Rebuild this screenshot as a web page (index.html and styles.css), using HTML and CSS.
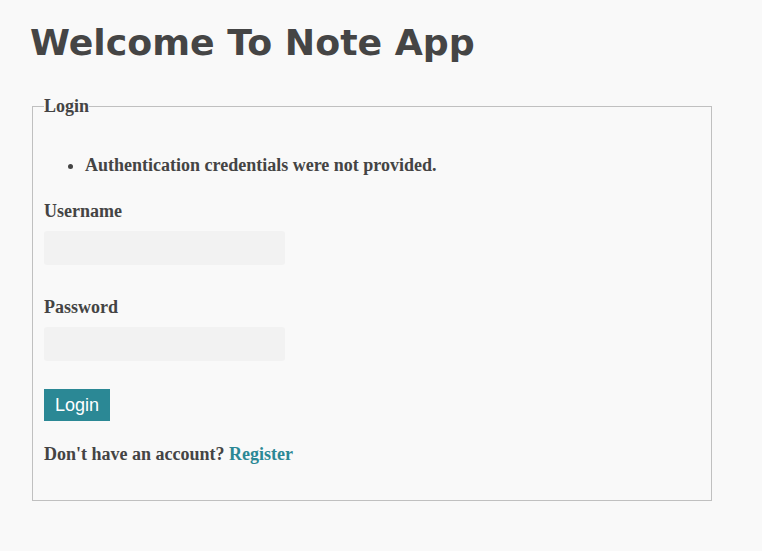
FILE: index.html
```html
<!DOCTYPE html>
<html lang="en">
<head>
<meta charset="utf-8">
<title>Note App</title>
<link rel="stylesheet" href="styles.css">
</head>
<body>
<div class="page">
  <h1 class="title">Welcome To Note App</h1>
  <fieldset class="login-box">
    <legend class="login-legend">Login</legend>
    <ul class="errors">
      <li>Authentication credentials were not provided.</li>
    </ul>
    <form class="login-form">
      <div class="field">
        <label class="field-label" for="username">Username</label>
        <input class="field-input" type="text" id="username" name="username">
      </div>
      <div class="field">
        <label class="field-label" for="password">Password</label>
        <input class="field-input" type="password" id="password" name="password">
      </div>
      <div class="actions">
        <button class="btn" type="button">Login</button>
      </div>
      <p class="register">Don't have an account? <a class="register-link" href="#">Register</a></p>
    </form>
  </fieldset>
</div>
</body>
</html>
```

FILE: styles.css
```css
html, body {
  margin: 0;
  padding: 0;
  background: #f9f9f9;
}

body {
  font-family: "Liberation Serif", "Times New Roman", serif;
  font-size: 18px;
  font-weight: bold;
  color: #444444;
}

.page {
  width: 684px;
  padding: 22px 0 0 30px;
}

.title {
  font-family: "DejaVu Sans", Verdana, sans-serif;
  font-size: 36.3px;
  font-weight: bold;
  line-height: 42px;
  margin: 0 0 32px 0;
  color: #454545;
}

.login-box {
  margin: 0 2px;
  padding: 0 11px 36px 11px;
  border: 1px solid #c0c0c0;
  min-width: 0;
}

.login-legend {
  padding: 0;
  font-size: 18px;
  line-height: 20px;
}

.errors {
  margin: 39px 0 0 0;
  padding: 0 0 0 41px;
  line-height: 20px;
}

.login-form {
  display: flex;
  flex-direction: column;
  align-items: flex-start;
}

.field {
  display: flex;
  flex-direction: column;
  align-items: flex-start;
  margin-top: 26px;
}

.field + .field {
  margin-top: 32px;
}

.field-label {
  line-height: 20px;
  margin-bottom: 10px;
}

.field-input {
  width: 241px;
  height: 34px;
  box-sizing: border-box;
  border: none;
  border-radius: 3px;
  background: #f2f2f2;
  margin: 0;
  padding: 0 8px;
  font-family: "Liberation Sans", Arial, sans-serif;
  font-size: 14px;
}

.actions {
  margin-top: 28px;
}

.btn {
  display: block;
  margin: 0;
  border: none;
  border-radius: 0;
  background: #2b8895;
  color: #ffffff;
  font-family: "Liberation Sans", Arial, sans-serif;
  font-size: 18px;
  font-weight: normal;
  line-height: 22px;
  padding: 5px 11px 5px 11px;
  cursor: pointer;
}

.register {
  margin: 23px 0 0 0;
  line-height: 20px;
}

.register-link {
  color: #2b8895;
  text-decoration: none;
}
```
